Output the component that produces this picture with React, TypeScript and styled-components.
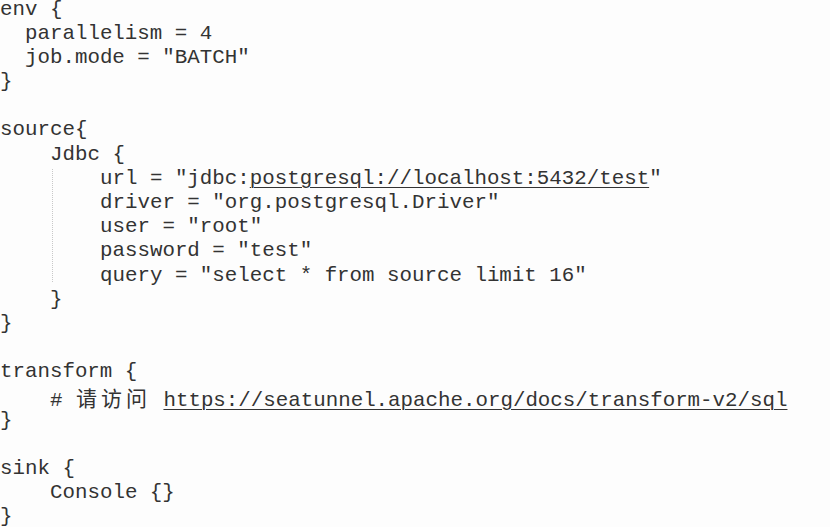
import React from "react";
import styled, { createGlobalStyle } from "styled-components";

const Global = createGlobalStyle`
  html, body { margin: 0; padding: 0; background: #fdfdfd; }
`;

const CELL = 12.5;

const Code = styled.div`
  font-family: "Liberation Mono", "Noto Sans CJK SC", monospace;
  font-size: 20.8px;
  line-height: 24.2px;
  color: #333333;
  margin-top: -2.5px;
  white-space: pre;
`;

const Line = styled.div<{ $indent?: number }>`
  height: 24.2px;
  padding-left: ${(p) => (p.$indent || 0) * CELL}px;
`;

const Guide = styled.div`
  position: relative;
  &::before {
    content: "";
    position: absolute;
    left: 52px;
    top: 2px;
    bottom: 6px;
    border-left: 1px dotted #c8c8c8;
  }
`;

const Link = styled.span`
  text-decoration: underline;
  text-decoration-thickness: 1px;
  text-underline-offset: 3px;
`;

const Cjk = styled.span`
  font-family: "Noto Sans CJK SC", sans-serif;
  font-size: 21px;
  letter-spacing: 4px;
  margin-left: 1px;
`;

export default function App() {
  return (
    <>
      <Global />
      <Code>
        <Line>env {"{"}</Line>
        <Line $indent={2}>parallelism = 4</Line>
        <Line $indent={2}>job.mode = "BATCH"</Line>
        <Line>{"}"}</Line>
        <Line />
        <Line>source{"{"}</Line>
        <Line $indent={4}>Jdbc {"{"}</Line>
        <Guide>
          <Line $indent={8}>
            url = "jdbc:<Link>postgresql://localhost:5432/test</Link>"
          </Line>
          <Line $indent={8}>driver = "org.postgresql.Driver"</Line>
          <Line $indent={8}>user = "root"</Line>
          <Line $indent={8}>password = "test"</Line>
          <Line $indent={8}>query = "select * from source limit 16"</Line>
        </Guide>
        <Line $indent={4}>{"}"}</Line>
        <Line>{"}"}</Line>
        <Line />
        <Line>transform {"{"}</Line>
        <Line $indent={4}>
          {"# "}<Cjk>请访问</Cjk>{" "}<Link>https://seatunnel.apache.org/docs/transform-v2/sql</Link>
        </Line>
        <Line>{"}"}</Line>
        <Line />
        <Line>sink {"{"}</Line>
        <Line $indent={4}>Console {"{}"}</Line>
        <Line>{"}"}</Line>
      </Code>
    </>
  );
}
